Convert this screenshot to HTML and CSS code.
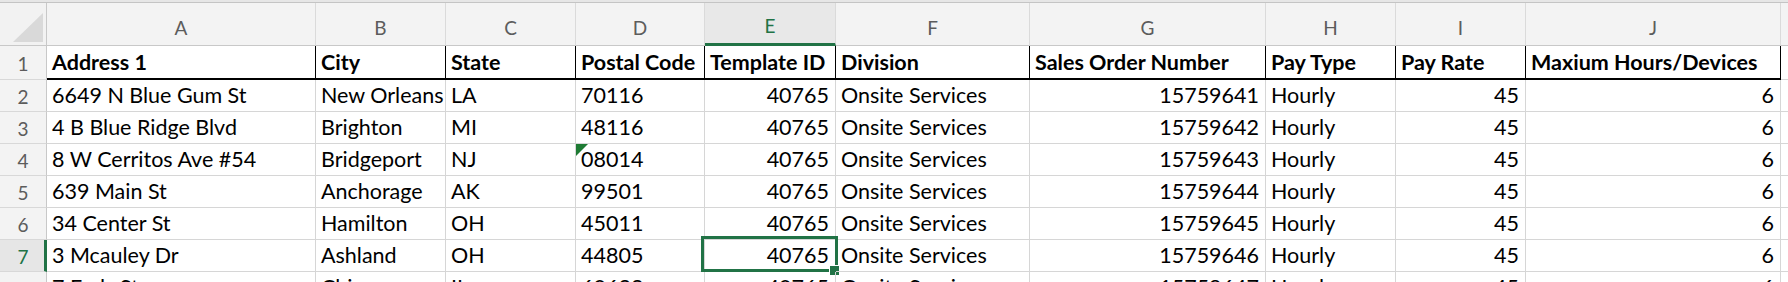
FILE: index.html
```html
<!DOCTYPE html>
<html>
<head>
<meta charset="utf-8">
<link rel="stylesheet" href="styles.css">
</head>
<body>
<div class="topstrip"></div>
<div class="sheet">
  <div class="corner"><span class="tri"></span></div>
  <div class="ch">A</div><div class="ch">B</div><div class="ch">C</div><div class="ch">D</div>
  <div class="ch ch-sel">E</div><div class="ch">F</div><div class="ch">G</div><div class="ch">H</div>
  <div class="ch">I</div><div class="ch">J</div><div class="ch ch-last"></div>

  <div class="rh rh-1">1</div>
  <div class="c hd">Address 1</div><div class="c hd">City</div><div class="c hd">State</div><div class="c hd">Postal Code</div>
  <div class="c hd">Template ID</div><div class="c hd">Division</div><div class="c hd">Sales Order Number</div><div class="c hd">Pay Type</div>
  <div class="c hd">Pay Rate</div><div class="c hd">Maxium Hours/Devices</div><div class="c hd-k"></div>

  <div class="rh">2</div>
  <div class="c">6649 N Blue Gum St</div><div class="c">New Orleans</div><div class="c">LA</div><div class="c">70116</div>
  <div class="c r">40765</div><div class="c">Onsite Services</div><div class="c r">15759641</div><div class="c">Hourly</div>
  <div class="c r">45</div><div class="c r">6</div><div class="c"></div>

  <div class="rh">3</div>
  <div class="c">4 B Blue Ridge Blvd</div><div class="c">Brighton</div><div class="c">MI</div><div class="c">48116</div>
  <div class="c r">40765</div><div class="c">Onsite Services</div><div class="c r">15759642</div><div class="c">Hourly</div>
  <div class="c r">45</div><div class="c r">6</div><div class="c"></div>

  <div class="rh">4</div>
  <div class="c">8 W Cerritos Ave #54</div><div class="c">Bridgeport</div><div class="c">NJ</div><div class="c flag">08014</div>
  <div class="c r">40765</div><div class="c">Onsite Services</div><div class="c r">15759643</div><div class="c">Hourly</div>
  <div class="c r">45</div><div class="c r">6</div><div class="c"></div>

  <div class="rh">5</div>
  <div class="c">639 Main St</div><div class="c">Anchorage</div><div class="c">AK</div><div class="c">99501</div>
  <div class="c r">40765</div><div class="c">Onsite Services</div><div class="c r">15759644</div><div class="c">Hourly</div>
  <div class="c r">45</div><div class="c r">6</div><div class="c"></div>

  <div class="rh">6</div>
  <div class="c">34 Center St</div><div class="c">Hamilton</div><div class="c">OH</div><div class="c">45011</div>
  <div class="c r">40765</div><div class="c">Onsite Services</div><div class="c r">15759645</div><div class="c">Hourly</div>
  <div class="c r">45</div><div class="c r">6</div><div class="c"></div>

  <div class="rh rh-sel">7</div>
  <div class="c">3 Mcauley Dr</div><div class="c">Ashland</div><div class="c">OH</div><div class="c">44805</div>
  <div class="c r sel">40765<span class="selbox"></span><span class="handle"></span></div><div class="c">Onsite Services</div><div class="c r">15759646</div><div class="c">Hourly</div>
  <div class="c r">45</div><div class="c r">6</div><div class="c"></div>

  <div class="rh">8</div>
  <div class="c">7 Eads St</div><div class="c">Chicago</div><div class="c">IL</div><div class="c">60632</div>
  <div class="c r">40765</div><div class="c">Onsite Services</div><div class="c r">15759647</div><div class="c">Hourly</div>
  <div class="c r">45</div><div class="c r">6</div><div class="c"></div>
</div>
</body>
</html>
```

FILE: styles.css
```css
html, body {
  margin: 0;
  padding: 0;
  background: #ffffff;
  overflow: hidden;
}
body {
  width: 1788px;
  height: 282px;
  font-family: Lato, "Liberation Sans", sans-serif;
}
.topstrip {
  height: 2px;
  background: #e6e6e6;
  border-bottom: 1px solid #c4c4c4;
}
.sheet {
  display: grid;
  grid-template-columns: 47px 269px 130px 130px 129px 131px 194px 236px 130px 130px 255px 1fr;
  grid-template-rows: 43px 34px repeat(7, 32px);
}
.sheet > div {
  box-sizing: border-box;
  min-width: 0;
}
.corner {
  background: #f2f2f2;
  border-right: 1px solid #c8c8c8;
  border-bottom: 1px solid #c8c8c8;
  position: relative;
}
.tri {
  position: absolute;
  right: 3px;
  bottom: 3px;
  width: 30px;
  height: 29px;
  background: #d9d9d9;
  clip-path: polygon(100% 0, 100% 100%, 0 100%);
}
.ch {
  background: #f3f3f3;
  border-right: 1px solid #dadada;
  border-bottom: 1px solid #c8c8c8;
  color: #5c5c5c;
  font-size: 19px;
  text-align: center;
  line-height: 42px;
  padding-top: 4px;
}
.ch-sel {
  background: #e8e8e8;
  color: #217346;
  border-bottom: 3px solid #217346;
  line-height: 40px;
  padding-top: 3px;
}
.ch-last {
  border-right: none;
}
.rh {
  background: #f3f3f3;
  border-right: 1px solid #c8c8c8;
  border-bottom: 1px solid #d8d8d8;
  color: #5c5c5c;
  font-size: 19px;
  text-align: center;
  line-height: 31px;
  padding-top: 1px;
}
.rh-1 {
  line-height: 33px;
}
.rh-sel {
  background: #e6e6e6;
  color: #217346;
  border-right: 3px solid #217346;
  padding-left: 2px;
}
.c {
  border-right: 1px solid #d6d6d6;
  border-bottom: 1px solid #d6d6d6;
  font-size: 21.5px;
  line-height: 31px;
  color: #000000;
  padding: 0 4px 0 5px;
  white-space: nowrap;
  overflow: hidden;
  position: relative;
}
.c.r {
  text-align: right;
  padding-right: 6px;
}
.c.hd {
  font-weight: 700;
  border-right: 1px solid #000000;
  border-bottom: 2px solid #000000;
  line-height: 32px;
}
.hd-k {
  border-bottom: 1px solid #d6d6d6;
}
.flag::before {
  content: "";
  position: absolute;
  left: 0;
  top: 0;
  width: 12px;
  height: 12px;
  background: #1e7b34;
  clip-path: polygon(0 0, 100% 0, 0 100%);
}
.c.sel {
  overflow: visible;
}
.selbox {
  position: absolute;
  left: -4px;
  top: -4px;
  right: -3px;
  bottom: -1px;
  border: 3px solid #217346;
  pointer-events: none;
}
.handle {
  position: absolute;
  right: -5px;
  bottom: -5px;
  width: 9px;
  height: 9px;
  background: #217346;
  border: 1px solid #ffffff;
}
```
